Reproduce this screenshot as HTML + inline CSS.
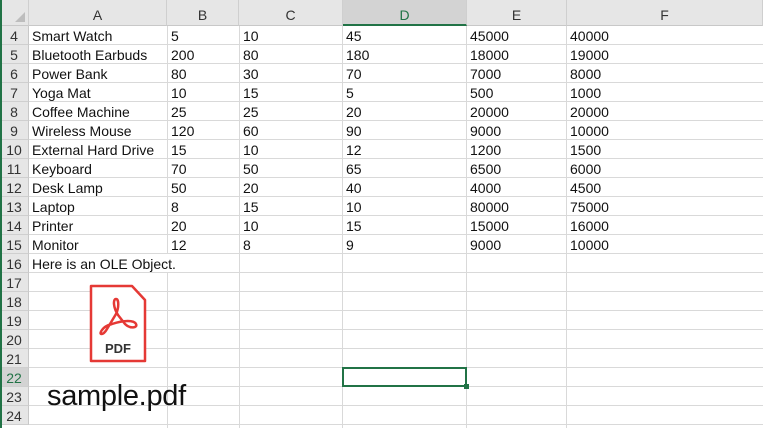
<!DOCTYPE html>
<html><head><meta charset="utf-8"><style>
html,body{margin:0;padding:0;width:763px;height:428px;overflow:hidden;background:#fff;font-family:"Liberation Sans","Noto Sans CJK SC",sans-serif;}
.a{position:absolute}
.hd{position:absolute;top:0;height:26px;background:#e6e6e6;border-right:1px solid #cfcfcf;border-bottom:1px solid #c8c8c8;box-sizing:border-box;text-align:center;font-size:14px;line-height:30px;color:#333}
.rh{position:absolute;left:0;width:29px;height:19px;background:#e6e6e6;border-bottom:1px solid #cfcfcf;border-right:1px solid #c8c8c8;box-sizing:border-box;text-align:center;font-size:14px;line-height:21px;color:#333}
.vl{position:absolute;top:26px;bottom:0;width:1px;background:#d9d9d9}
.hl{position:absolute;left:29px;right:0;height:1px;background:#d9d9d9}
.t{position:absolute;font-size:14px;line-height:21px;color:#111;white-space:nowrap}
</style></head><body>
<div class="hd" style="left:0;width:29px"></div>
<div class="a" style="left:15px;top:12px;width:0;height:0;border-left:10px solid transparent;border-bottom:10px solid #bdbdbd"></div>
<div class="hd" style="left:29px;width:138px">A</div>
<div class="hd" style="left:167px;width:72px">B</div>
<div class="hd" style="left:239px;width:104px">C</div>
<div class="hd" style="left:343px;width:124px;background:#d3d3d3;border-bottom:2px solid #217346;color:#217346">D</div>
<div class="hd" style="left:467px;width:100px">E</div>
<div class="hd" style="left:567px;width:196px">F</div>
<div class="vl" style="left:167px"></div><div class="vl" style="left:239px"></div><div class="vl" style="left:342px"></div><div class="vl" style="left:466px"></div><div class="vl" style="left:566px"></div>
<div id="g"></div>
<script>
(function(){
var rows=[["Smart Watch",5,10,45,45000,40000],["Bluetooth Earbuds",200,80,180,18000,19000],["Power Bank",80,30,70,7000,8000],["Yoga Mat",10,15,5,500,1000],["Coffee Machine",25,25,20,20000,20000],["Wireless Mouse",120,60,90,9000,10000],["External Hard Drive",15,10,12,1200,1500],["Keyboard",70,50,65,6500,6000],["Desk Lamp",50,20,40,4000,4500],["Laptop",8,15,10,80000,75000],["Printer",20,10,15,15000,16000],["Monitor",12,8,9,9000,10000]];
var xs=[32,171,243,346,470,570],h="";
for(var r=4;r<=24;r++){var y=26+(r-4)*19;
h+='<div class="rh" style="top:'+y+'px;'+(r==22?'background:#d3d3d3;color:#217346;':'')+'">'+r+'</div>';
h+='<div class="hl" style="top:'+(y+18)+'px"></div>';
var d=rows[r-4];if(d){for(var c=0;c<6;c++)h+='<div class="t" style="left:'+xs[c]+'px;top:'+y+'px">'+d[c]+'</div>';}
if(r==16)h+='<div class="t" style="left:32px;top:'+y+'px;height:18px;background:#fff;padding-right:2px">Here is an OLE Object.</div>';}
document.getElementById('g').innerHTML=h;
})();
</script>
<div class="a" style="left:0;top:0;width:2px;height:428px;background:#217346"></div>
<div class="a" style="left:342px;top:367px;width:125px;height:20px;border:2px solid #217346;box-sizing:border-box"></div>
<div class="a" style="left:464px;top:384px;width:5px;height:5px;background:#217346"></div>
<svg class="a" style="left:88px;top:284px" width="60" height="80" viewBox="0 0 60 80">
<path d="M3 2 H44 L57 16 V77 H3 Z" fill="#fff" stroke="#e53935" stroke-width="2.5" stroke-linejoin="round"/>
<path d="M14 46 C10 51 15 52 19 45 L28 30 C31 24 31 15 28 15 C25 15 25 23 30 31 L37 40 C42 45 50 44 48 40 C46 36 36 36 24 40 C20 41 16 43 14 46" fill="none" stroke="#e53935" stroke-width="2.5" stroke-linejoin="round"/>
<text x="30" y="69" text-anchor="middle" font-family="Liberation Sans,sans-serif" font-weight="bold" font-size="13" fill="#333">PDF</text>
</svg>
<div class="a" style="left:47px;top:378px;font-size:29px;line-height:36px;color:#111;letter-spacing:-0.3px">sample.pdf</div>
</body></html>
